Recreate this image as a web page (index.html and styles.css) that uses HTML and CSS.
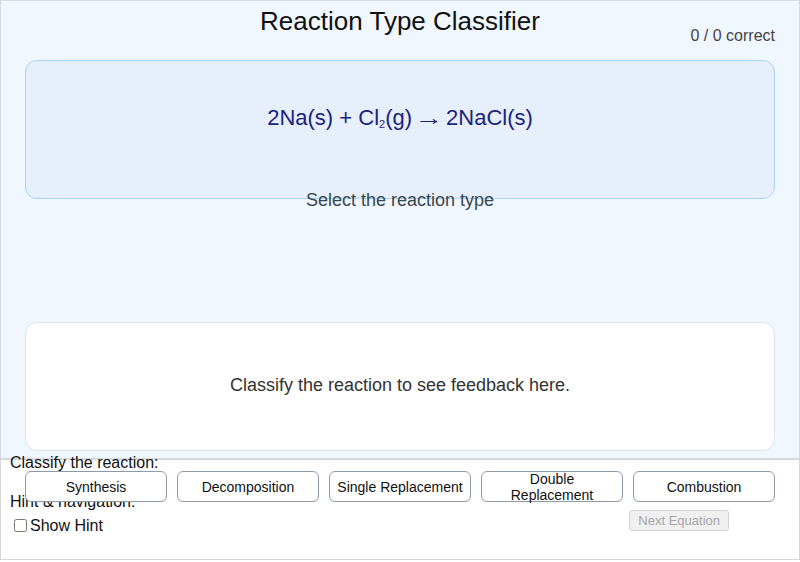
FILE: index.html
```html
<!DOCTYPE html>
<html lang="en">
<head>
<meta charset="utf-8">
<title>Reaction Type Classifier</title>
<link rel="stylesheet" href="styles.css">
</head>
<body>
<div class="app">
  <h1 class="title">Reaction Type Classifier</h1>
  <div class="score">0 / 0 correct</div>
  <div class="equation-card">
    <div class="equation">2Na(s) + Cl<sub class="sub">2</sub>(g)<span class="arrow">→</span>2NaCl(s)</div>
    <div class="prompt">Select the reaction type</div>
  </div>
  <div class="feedback-card">
    <p class="feedback-text">Classify the reaction to see feedback here.</p>
  </div>
</div>
<div class="panel">
  <div class="panel-label first">Classify the reaction:</div>
  <div class="choices">
    <button class="choice">Synthesis</button>
    <button class="choice">Decomposition</button>
    <button class="choice">Single Replacement</button>
    <button class="choice">Double Replacement</button>
    <button class="choice">Combustion</button>
  </div>
  <div class="panel-label second">Hint &amp; navigation:</div>
  <div class="nav-row">
    <label class="hint-toggle"><input type="checkbox" class="hint-box">Show Hint</label>
    <button class="next-btn" disabled>Next Equation</button>
  </div>
</div>
</body>
</html>
```

FILE: styles.css
```css
html, body {
  margin: 0;
  padding: 0;
  background: #ffffff;
}

body {
  font-family: "Liberation Sans", Arial, sans-serif;
  color: #111;
}

.app {
  box-sizing: border-box;
  height: 459px;
  border: 1px solid #d3dbe3;
  background: #f0f7ff;
  padding: 0 24px;
}

.title {
  margin: 4.5px 0 0;
  font-size: 26px;
  line-height: 30px;
  font-weight: normal;
  text-align: center;
  color: #111;
}

.score {
  margin-top: -8.5px;
  font-size: 16px;
  line-height: 18px;
  text-align: right;
  color: #444;
}

.equation-card {
  box-sizing: border-box;
  height: 139px;
  margin-top: 15px;
  padding-top: 44px;
  border: 1px solid #abd3f8;
  border-radius: 12px;
  background: #e7effc;
  text-align: center;
}

.equation {
  font-size: 22px;
  line-height: 26px;
  color: #1a237e;
}

.sub {
  font-size: 11px;
  line-height: 0;
  vertical-align: -3px;
}

.arrow {
  display: inline-block;
  font-size: 22px;
  line-height: 0;
  transform: scaleX(1.3);
  margin: 0 6px;
}

.prompt {
  margin-top: 59px;
  font-size: 18px;
  line-height: 21px;
  color: #37474f;
}

.feedback-card {
  box-sizing: border-box;
  height: 129px;
  margin-top: 123px;
  padding-bottom: 3px;
  border: 1px solid #dbe3ec;
  border-radius: 12px;
  background: #ffffff;
  display: flex;
  align-items: center;
  justify-content: center;
}

.feedback-text {
  margin: 0;
  font-size: 18px;
  line-height: 21px;
  color: #333;
}

.panel {
  box-sizing: border-box;
  height: 101px;
  border: 1px solid #d6d6d6;
  background: #ffffff;
  padding: 0 9px;
}

.panel-label {
  font-size: 16px;
  line-height: 18px;
  color: #111;
}

.panel-label.first {
  margin-top: -6px;
}

.panel-label.second {
  margin-top: -8.5px;
}

.choices {
  display: flex;
  gap: 10px;
  margin-top: -1.5px;
  padding: 0 15px;
}

.choice {
  position: relative;
  box-sizing: border-box;
  width: 142px;
  height: 31px;
  padding: 1px 6px 0;
  border: 1px solid #8c9bab;
  border-radius: 6px;
  background: #ffffff;
  font-family: "Liberation Sans", Arial, sans-serif;
  font-size: 14px;
  line-height: 16px;
  color: #111;
  display: flex;
  align-items: center;
  justify-content: center;
  text-align: center;
}

.nav-row {
  display: flex;
  align-items: flex-start;
  margin-top: -1.5px;
}

.hint-toggle {
  display: flex;
  align-items: center;
  margin-top: 7px;
  font-size: 16px;
  line-height: 18px;
  color: #111;
}

.hint-box {
  width: 13px;
  height: 13px;
  margin: 0 3px 0 4px;
}

.next-btn {
  box-sizing: border-box;
  height: 21px;
  margin-left: auto;
  margin-right: 61px;
  padding: 0 8px;
  border: 1px solid #d2d2d2;
  border-radius: 3px;
  background: #f0f0f0;
  font-family: "Liberation Sans", Arial, sans-serif;
  font-size: 13px;
  line-height: 15px;
  color: #a6a6a6;
}
```
